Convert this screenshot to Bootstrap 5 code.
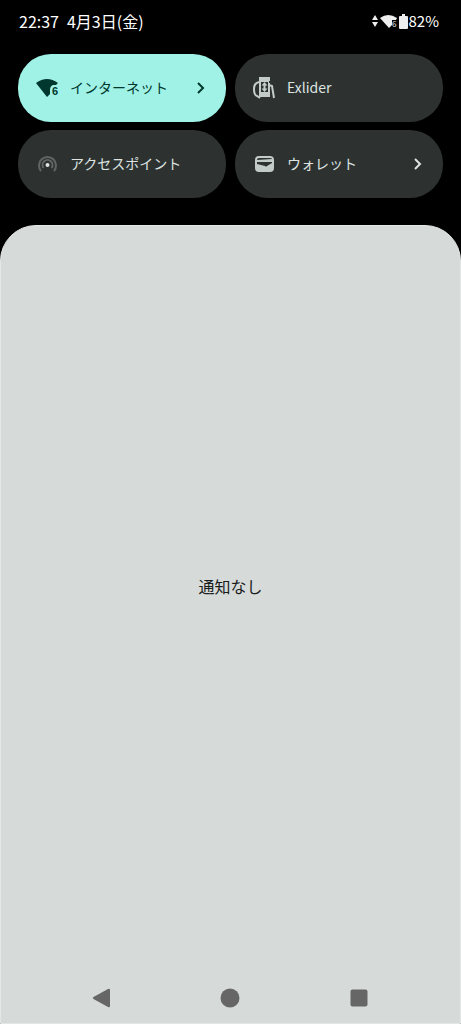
<!DOCTYPE html>
<html lang="ja">
<head>
<meta charset="utf-8">
<meta name="viewport" content="width=device-width, initial-scale=1">
<title>通知</title>
<link href="https://cdn.jsdelivr.net/npm/bootstrap@5.3.0/dist/css/bootstrap.min.css" rel="stylesheet">
<style>
  body { background: #000; color: #fff; font-family: "Noto Sans CJK JP", sans-serif; font-size: 16px; line-height: 24px; }
  .status { padding: 9px 22px 0 19px; }
  .status-icons { font-size: 15px; }
  .tiles { display: grid; grid-template-columns: 1fr 1fr; gap: 8px 9px; padding: 21px 18px 27px; }
  .tile, .tile:hover, .tile:active { height: 68px; border: 0; border-radius: 33px; padding: 0 17px 0 17px; gap: 11px; font-size: 14px; line-height: 20px; background: #2d3231; color: #dde4e2; }
  .tile.on { background: #9ff2e5; color: #00382f; }
  .tile span { padding-bottom: 2px; }
  .sheet { background: #d6dbd9; color: #191c1b; border: 1px solid #e3e8e6; border-radius: 36px 36px 0 0; }
  .notice { padding-bottom: 40px; }
  .sysnav { padding: 0 37px 13px; }
  .sysnav button { height: 24px; color: #666; line-height: 0; }
</style>
</head>
<body class="min-vh-100 d-flex flex-column">
<header class="status d-flex justify-content-between align-items-center">
  <div class="d-flex gap-2"><time>22:37</time><span>4月3日(金)</span></div>
  <div class="status-icons d-flex align-items-center">
    <svg width="8" height="16" viewBox="0 0 8 16" fill="#eee" aria-hidden="true"><path d="M0 7 3 2l3 5zM0 9h6l-3 5z"/></svg>
    <svg width="19" height="16" viewBox="0 0 19 16" aria-hidden="true"><path d="M0 5Q8-1 17 5L16 7H12V12L9 15z" fill="#eee"/><text x="12" y="14" font-size="8" fill="#eee">6</text></svg>
    <svg width="10" height="18" viewBox="0 0 10 18" fill="#eee" aria-hidden="true"><path d="M3 2h3v2h2q1 0 1 1v11q0 1-1 1H1q-1 0-1-1V5q0-1 1-1h2z"/></svg>
    <span>82%</span>
  </div>
</header>

<section class="tiles" aria-label="クイック設定">
  <button type="button" class="btn tile on d-flex align-items-center text-start">
    <svg width="24" height="24" viewBox="0 0 24 24" fill="currentColor" aria-hidden="true"><path d="M1 7Q12-1 23 7L21 9H18Q15 10 15 14V18L12 21z"/><text x="17" y="19" font-size="11" font-weight="700" font-family="Liberation Sans">6</text></svg>
    <span class="flex-grow-1">インターネット</span>
    <svg width="16" height="16" viewBox="0 0 16 16" fill="none" stroke="currentColor" stroke-width="2" aria-hidden="true"><path d="m5 3 5 5-5 5"/></svg>
  </button>
  <button type="button" class="btn tile d-flex align-items-center text-start">
    <svg width="24" height="24" viewBox="0 0 24 24" aria-hidden="true"><path d="M7 6Q2 7 2 13q0 6 3 7l3 2M17 9l3 1 1 6 1 6" fill="none" stroke="#c3cbc8" stroke-width="2"/><path d="M7 1h11v4h-1v2h1v14H7z" fill="#c3cbc8"/><path d="M9 6h7v10H9z" fill="#2d3231"/><path d="m12.500 6 3 3.500h-2v3h2l-3 3.500-3-3.500h2v-3h-2z" fill="#c3cbc8"/></svg>
    <span>Exlider</span>
  </button>
  <button type="button" class="btn tile d-flex align-items-center text-start">
    <svg width="24" height="24" viewBox="0 0 24 24" fill="none" stroke="#606664" stroke-width="2" aria-hidden="true"><path d="M6 19A8.500 8.500 0 1 1 19 19M8.500 16A5 5 0 1 1 16.500 16"/><circle cx="12.500" cy="13" r="2" fill="#dde4e2" stroke="none"/></svg>
    <span>アクセスポイント</span>
  </button>
  <button type="button" class="btn tile d-flex align-items-center text-start">
    <svg width="24" height="24" viewBox="0 0 24 24" aria-hidden="true"><rect x="3" y="4" width="19" height="16" rx="4" fill="#c3cbc8"/><path d="M5 8q0-2 2-2h11q2 0 2 1zM5 10h15v1l-5 3q-1 1-2 0l-8-2z" fill="#2d3231"/></svg>
    <span class="flex-grow-1">ウォレット</span>
    <svg width="16" height="16" viewBox="0 0 16 16" fill="none" stroke="currentColor" stroke-width="2" aria-hidden="true"><path d="m5 3 5 5-5 5"/></svg>
  </button>
</section>

<main class="sheet flex-grow-1 d-flex flex-column">
  <p class="notice flex-grow-1 d-flex align-items-center justify-content-center m-0">通知なし</p>
  <nav class="sysnav d-flex" aria-label="システム">
    <button type="button" class="btn border-0 p-0 flex-fill" aria-label="戻る"><svg width="24" height="24" viewBox="0 0 24 24" fill="currentColor"><path d="M3.500 11 18 3q2-1 2 1v16q0 2-2 1L3.500 13q-1.500-1 0-2z"/></svg></button>
    <button type="button" class="btn border-0 p-0 flex-fill" aria-label="ホーム"><svg width="24" height="24" viewBox="0 0 24 24" fill="currentColor"><circle cx="12" cy="12" r="9.500"/></svg></button>
    <button type="button" class="btn border-0 p-0 flex-fill" aria-label="アプリ履歴"><svg width="24" height="24" viewBox="0 0 24 24" fill="currentColor"><rect x="3.500" y="3.500" width="17" height="17" rx="2"/></svg></button>
  </nav>
</main>
<script src="https://cdn.jsdelivr.net/npm/bootstrap@5.3.0/dist/js/bootstrap.bundle.min.js"></script>
</body>
</html>
